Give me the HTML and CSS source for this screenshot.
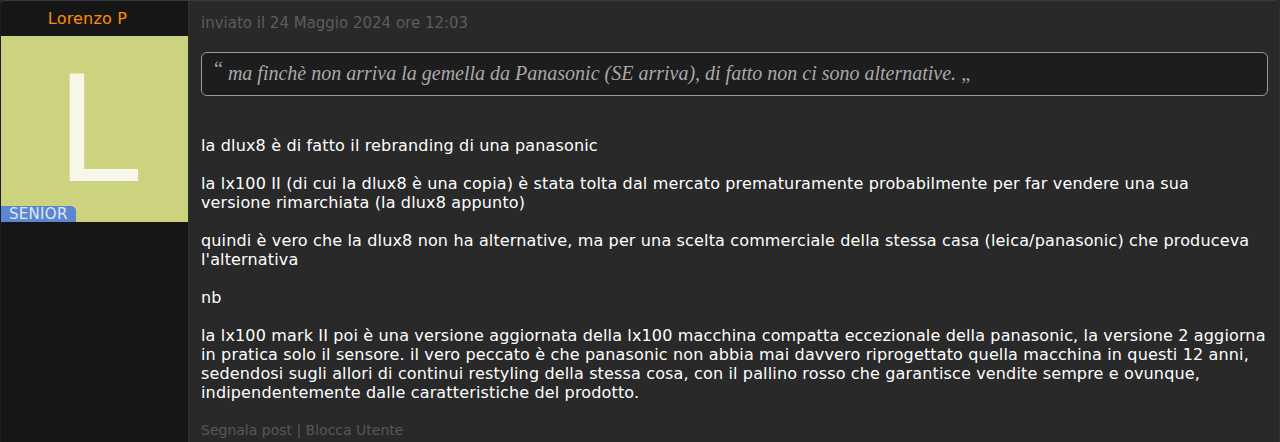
FILE: index.html
```html
<!DOCTYPE html>
<html lang="it">
<head>
<meta charset="utf-8">
<title>Post</title>
<link rel="stylesheet" href="styles.css">
</head>
<body>
<div class="post">
  <aside class="side">
    <div class="name">Lorenzo P</div>
    <div class="avatar">
      <span class="initial">L</span>
      <span class="badge">SENIOR</span>
    </div>
  </aside>
  <main class="main">
    <div class="date">inviato il 24 Maggio 2024 ore 12:03</div>
    <blockquote class="quote"><span class="q-open">“</span> ma finchè non arriva la gemella da Panasonic (SE arriva), di fatto non ci sono alternative. <span class="q-close">„</span></blockquote>
    <div class="body">
      <p>la dlux8 è di fatto il rebranding di una panasonic</p>
      <p>la lx100 II (di cui la dlux8 è una copia) è stata tolta dal mercato prematuramente probabilmente per far vendere una sua<br>versione rimarchiata (la dlux8 appunto)</p>
      <p>quindi è vero che la dlux8 non ha alternative, ma per una scelta commerciale della stessa casa (leica/panasonic) che produceva l'alternativa</p>
      <p>nb</p>
      <p>la lx100 mark II poi è una versione aggiornata della lx100 macchina compatta eccezionale della panasonic, la versione 2 aggiorna in pratica solo il sensore. il vero peccato è che panasonic non abbia mai davvero riprogettato quella macchina in questi 12 anni, sedendosi sugli allori di continui restyling della stessa cosa, con il pallino rosso che garantisce vendite sempre e ovunque, indipendentemente dalle caratteristiche del prodotto.</p>
    </div>
    <div class="actions">Segnala post | Blocca Utente</div>
  </main>
</div>
</body>
</html>
```

FILE: styles.css
```css
html, body {
  margin: 0;
  padding: 0;
  background: #282828;
}
body {
  font-family: "DejaVu Sans", sans-serif;
  font-size: 16px;
  color: #ffffff;
}
.post {
  display: flex;
  min-height: 460px;
  border-top: 1px solid #3a3a3a;
  border-left: 1px solid #1c1c1c;
  border-right: 1px solid #333;
  border-radius: 6px 6px 0 0;
  overflow: hidden;
  box-sizing: border-box;
}
.side {
  width: 187px;
  flex: none;
  background: #161616;
  border-right: 1px solid #303030;
}
.name {
  height: 35px;
  display: flex;
  align-items: center;
  justify-content: center;
  color: #ff8c00;
  font-size: 16px;
  letter-spacing: 0.2px;
  padding: 0 14px 1px 0;
  box-sizing: border-box;
}
.avatar {
  position: relative;
  height: 186px;
  background: #ccd27e;
  display: flex;
  justify-content: center;
  align-items: center;
}
.initial {
  font-family: "Liberation Sans", Arial, sans-serif;
  font-size: 155px;
  line-height: 120px;
  height: 120px;
  color: #f6f7e8;
  margin-left: 11px;
  margin-top: -2px;
}
.badge {
  position: absolute;
  left: 0;
  bottom: 0;
  width: 75px;
  height: 16px;
  background: #5b87d1;
  color: #dfe8f8;
  font-size: 15px;
  letter-spacing: 0.3px;
  line-height: 17px;
  padding-left: 8px;
  box-sizing: border-box;
  border-radius: 0 5px 0 0;
}
.main {
  flex: 1;
  background: #292929;
  padding: 13px 11px 0 12px;
  min-width: 0;
}
.date {
  color: #5c5c5c;
  font-size: 15px;
  line-height: 19px;
}
.quote {
  margin: 19px 0 0 0;
  height: 44px;
  box-sizing: border-box;
  border: 1px solid #9a9a9a;
  border-radius: 6px;
  background: #1d1d1d;
  color: #a9a9a9;
  font-family: "Liberation Serif", "Times New Roman", serif;
  font-style: italic;
  font-size: 20px;
  line-height: 40px;
  padding: 0 12px 0 12px;
  white-space: nowrap;
}
.q-open {
  font-style: normal;
  position: relative;
  top: -4px;
}
.q-close {
  font-style: normal;
}
.body {
  margin-top: 40px;
  line-height: 19px;
  letter-spacing: 0.15px;
}
.body p {
  margin: 0 0 19px 0;
}
.actions {
  color: #575757;
  font-size: 14px;
  line-height: 19px;
  margin-top: 6px;
}
```
